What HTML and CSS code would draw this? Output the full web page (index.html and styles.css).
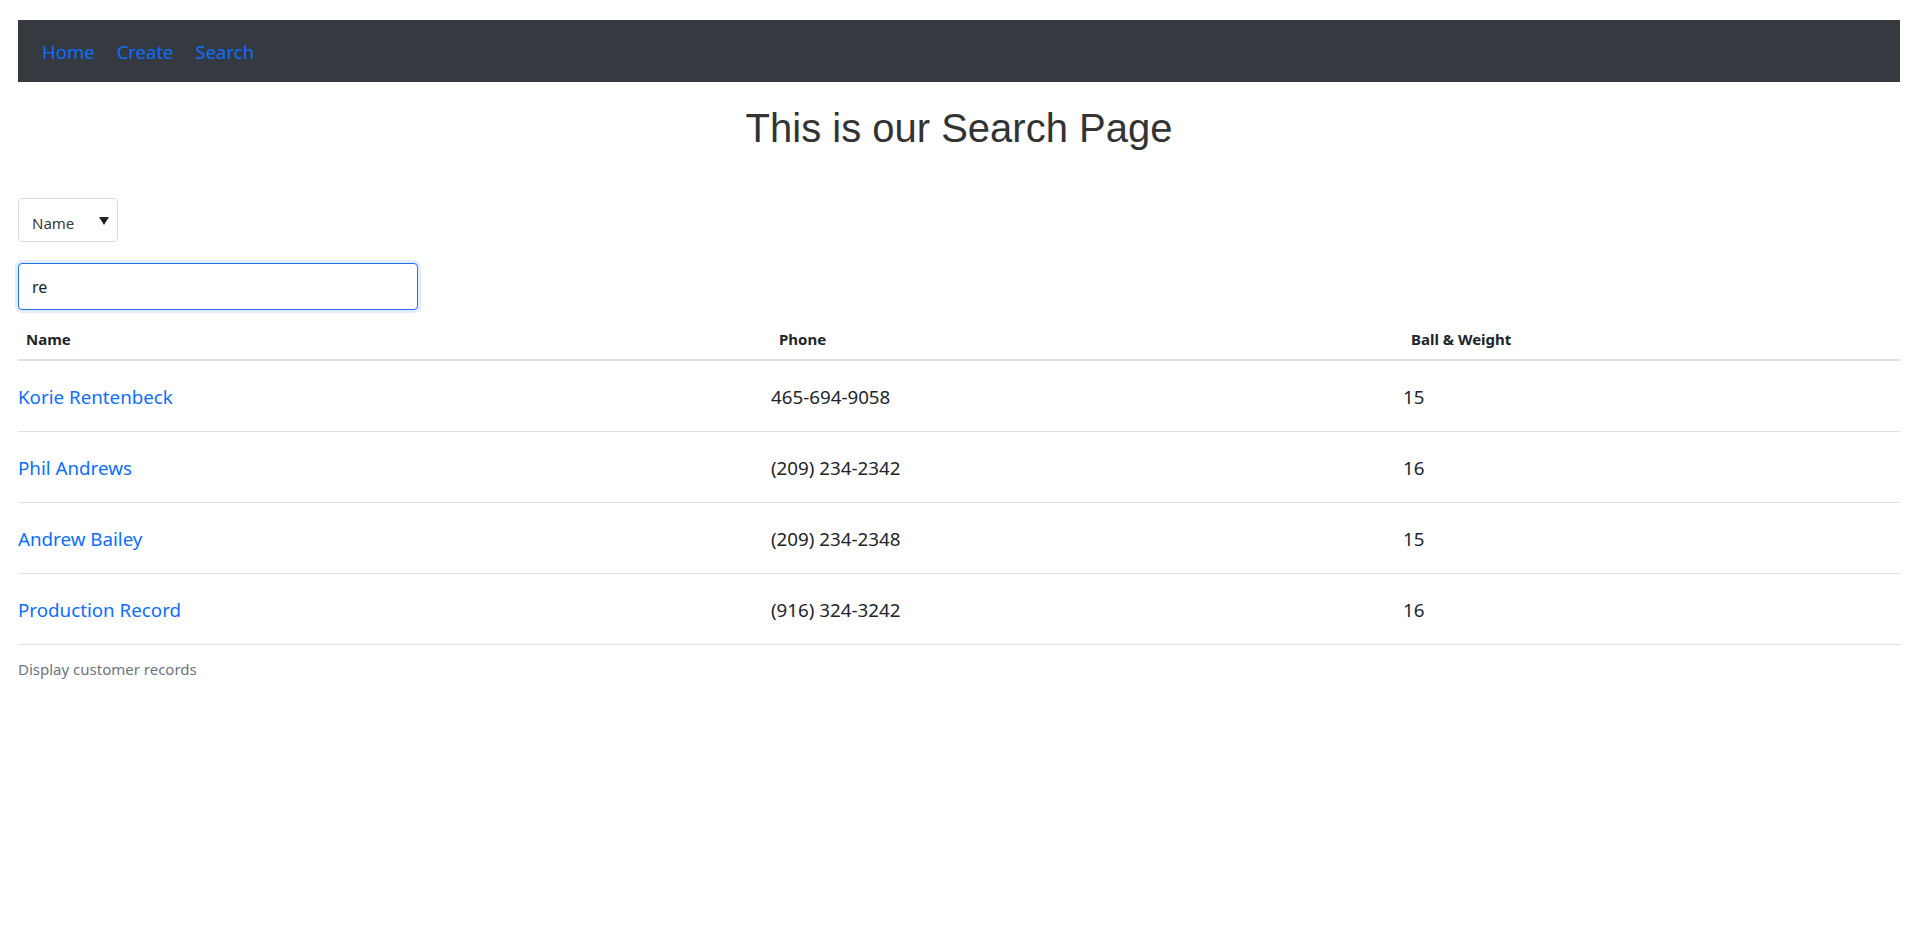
FILE: index.html
```html
<!DOCTYPE html>
<html lang="en">
<head>
<meta charset="utf-8">
<title>Search</title>
<link rel="stylesheet" href="styles.css">
</head>
<body>
<div class="page">
  <nav class="navbar">
    <a class="nav-link" href="#">Home</a>
    <a class="nav-link" href="#">Create</a>
    <a class="nav-link" href="#">Search</a>
  </nav>
  <h1 class="title">This is our Search Page</h1>
  <div class="select-wrap">
    <select class="field-select">
      <option>Name</option>
      <option>Phone</option>
    </select>
    <svg class="caret" width="10" height="8" viewBox="0 0 10 8"><path d="M0 0H10L5 8Z" fill="#222"/></svg>
  </div>
  <input class="search-input" type="text" value="re">
  <table class="records">
    <colgroup>
      <col class="c-name"><col class="c-phone"><col class="c-ball">
    </colgroup>
    <thead>
      <tr><th>Name</th><th>Phone</th><th>Ball &amp; Weight</th></tr>
    </thead>
    <tbody>
      <tr><td><a href="#">Korie Rentenbeck</a></td><td>465-694-9058</td><td>15</td></tr>
      <tr><td><a href="#">Phil Andrews</a></td><td>(209) 234-2342</td><td>16</td></tr>
      <tr><td><a href="#">Andrew Bailey</a></td><td>(209) 234-2348</td><td>15</td></tr>
      <tr><td><a href="#">Production Record</a></td><td>(916) 324-3242</td><td>16</td></tr>
    </tbody>
  </table>
  <p class="caption">Display customer records</p>
</div>
</body>
</html>
```
FILE: styles.css
```css
* { box-sizing: border-box; }
html, body { margin: 0; padding: 0; background: #fff; }
body {
  font-family: "Noto Sans", "Open Sans", "DejaVu Sans", sans-serif;
  color: #212529;
  font-size: 20px;
}
.page { padding: 20px 18px; }

.navbar {
  height: 62px;
  background: #343a40;
  display: flex;
  align-items: center;
  padding-left: 24px;
  gap: 22px;
}
.nav-link {
  color: #0d6efd;
  text-decoration: none;
  font-size: 18.5px;
  line-height: 24px;
  padding-top: 2px;
}

.title {
  font-family: "Liberation Sans", Arial, sans-serif;
  font-weight: normal;
  font-size: 40px;
  line-height: 48px;
  color: #333333;
  text-align: center;
  margin: 22px 0 0;
}

.select-wrap {
  position: relative;
  width: 100px;
  height: 44px;
  margin-top: 46px;
}
.field-select {
  appearance: none;
  -webkit-appearance: none;
  width: 100%;
  height: 100%;
  border: 1px solid #dcdcdc;
  border-radius: 4px;
  background: #fff;
  font-family: inherit;
  font-size: 15px;
  color: #3a3a3a;
  padding: 5px 0 0 13px;
}
.caret { position: absolute; left: 81px; top: 19px; }

.search-input {
  display: block;
  width: 400px;
  height: 47px;
  margin-top: 21px;
  border: 1px solid #1f6fe8;
  border-radius: 4px;
  box-shadow: 0 0 0 3px rgba(13, 110, 253, 0.12);
  outline: none;
  font-family: inherit;
  font-size: 16px;
  color: #212529;
  padding: 0 13px;
}

.records {
  width: 100%;
  border-collapse: collapse;
  margin-top: 9px;
}
.c-name { width: 753px; }
.c-phone { width: 632px; }
.records th {
  text-align: left;
  font-size: 15px;
  font-weight: bold;
  line-height: 24px;
  padding: 8px 8px;
  border-bottom: 2px solid #dee2e6;
}
.records td {
  font-size: 18.75px;
  line-height: 24px;
  height: 71px;
  padding: 2px 0 0;
  border-bottom: 1px solid #dee2e6;
  vertical-align: middle;
}
.records td a { color: #0d6efd; text-decoration: none; }

.caption {
  margin: 12px 0 0;
  font-size: 15px;
  line-height: 24px;
  color: #6c757d;
}
```
